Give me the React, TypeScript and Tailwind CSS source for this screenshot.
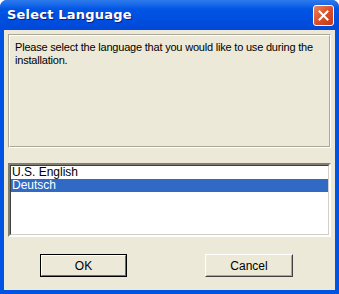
import React from "react";

const font = { fontFamily: '"Liberation Sans", Arial, sans-serif' };

function CloseButton() {
  return (
    <div className="w-[21px] h-[21px] rounded-[3px] border border-white bg-gradient-to-br from-[#e9835f] via-[#d9502b] to-[#c03a18] flex items-center justify-center">
      <svg width="11" height="11" viewBox="0 0 11 11">
        <path d="M1.5 1.5 L9.5 9.5 M9.5 1.5 L1.5 9.5" stroke="white" strokeWidth="2" strokeLinecap="square" />
      </svg>
    </div>
  );
}

export default function App() {
  const languages = ["U.S. English", "Deutsch"];
  const selected = 1;

  return (
    <div className="w-[339px] h-[294px] bg-white" style={font}>
      <div className="w-full h-full flex flex-col rounded-t-[7px] bg-[#0054e3] overflow-hidden">
        <div className="h-[30px] shrink-0 flex items-center justify-between pl-[7px] pr-[5px] bg-gradient-to-b from-[#2e7bec] via-[#0055e5] via-30% to-[#0048d8]">
          <span className="text-white font-bold text-[13px] tracking-[0.2px] [text-shadow:1px_1px_0_#0a1e7a]" style={{ fontFamily: '"DejaVu Sans", sans-serif' }}>
            Select Language
          </span>
          <CloseButton />
        </div>
        <div className="flex-1 mx-[4px] mb-[4px] bg-[#ece9d8] flex flex-col px-[4px] pt-[4px]">
          <div className="h-[114px] border border-t-[#aca899] border-l-[#aca899] border-b-white border-r-white">
            <div className="h-full border border-t-white border-l-white border-b-[#aca899] border-r-[#aca899] px-[5px] pt-[5px] text-[11px] leading-[13px] tracking-[-0.2px] text-black whitespace-nowrap">
              Please select the language that you would like to use during the
              <br />
              installation.
            </div>
          </div>
          <div className="mt-[15px] h-[74px] border-2 border-t-[#7f7c70] border-l-[#7f7c70] border-b-white border-r-white bg-white">
            <div className="h-full border border-t-[#404040] border-l-[#404040] border-b-[#d4d0c8] border-r-[#d4d0c8] text-[12px] leading-[13px]">
              {languages.map((l, i) => (
                <div
                  key={l}
                  className={`px-[1px] ${i === selected ? "bg-[#316ac5] text-white" : "text-black"}`}
                >
                  {l}
                </div>
              ))}
            </div>
          </div>
          <div className="flex justify-between pl-[32px] pr-[38px] mt-[17px]">
            <button className="w-[87px] h-[23px] border border-black bg-[#ece9d8] text-[12px] text-black">
              <div className="w-full h-full border border-t-white border-l-white border-b-[#716f64] border-r-[#716f64] flex items-center justify-center">
                OK
              </div>
            </button>
            <button className="w-[88px] h-[23px] border border-t-white border-l-white border-b-[#404040] border-r-[#404040] bg-[#ece9d8] text-[12px] text-black">
              <div className="w-full h-full border border-transparent border-b-[#aca899] border-r-[#aca899] flex items-center justify-center">
                Cancel
              </div>
            </button>
          </div>
        </div>
      </div>
    </div>
  );
}
